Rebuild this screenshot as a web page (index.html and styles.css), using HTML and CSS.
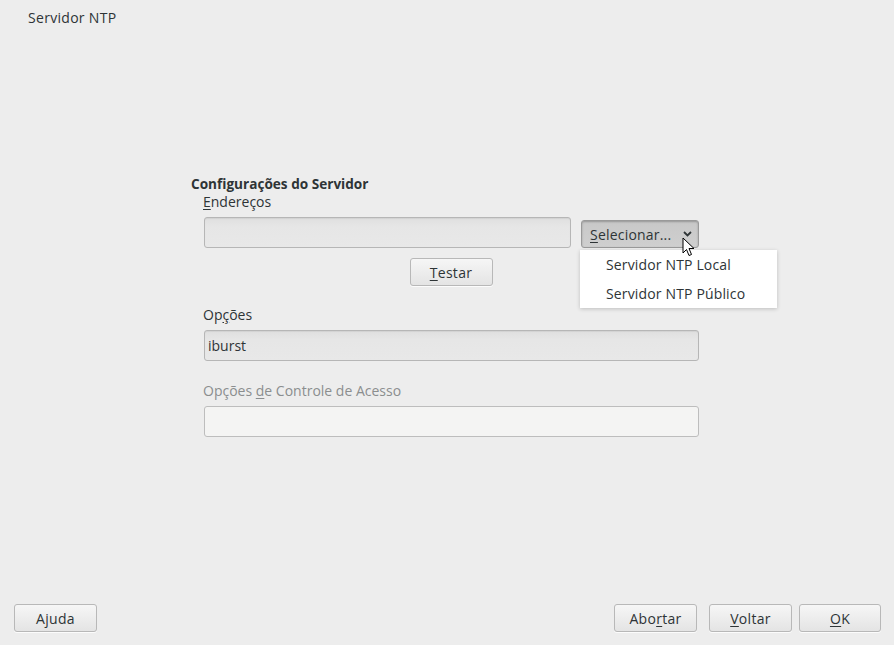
FILE: index.html
```html
<!DOCTYPE html>
<html lang="pt">
<head>
<meta charset="utf-8">
<title>Servidor NTP</title>
<link rel="stylesheet" href="styles.css">
</head>
<body>
<div class="window">
  <div class="title">Servidor NTP</div>
  <div class="content">
    <div class="section">
      <div class="heading">Configurações do Servidor</div>
      <div class="group">
        <div class="label"><u>E</u>ndereços</div>
        <div class="addr-row">
          <div class="entry addr"></div>
          <div class="select-wrap">
            <div class="select"><span><u>S</u>elecionar...</span>
              <svg class="chev" width="9" height="6" viewBox="0 0 9 6"><path d="M1 1 L4.5 4.5 L8 1" fill="none" stroke="#2e3436" stroke-width="1.8"/></svg>
            </div>
            <div class="menu">
              <div class="menu-item">Servidor NTP Local</div>
              <div class="menu-item">Servidor NTP Público</div>
            </div>
            <svg class="cursor" width="14" height="22" viewBox="0 0 14 22"><path d="M1 1 L1 16 L4.5 12.5 L7 18.5 L9.5 17.5 L7 11.5 L12 11.5 Z" fill="#fff" stroke="#000" stroke-width="1" stroke-linejoin="round"/></svg>
          </div>
        </div>
        <div class="test-row"><button class="btn test"><u>T</u>estar</button></div>
        <div class="label opt-label">Op<u>ç</u>ões</div>
        <div class="entry wide">iburst</div>
        <div class="label disabled-label">Opções <u>d</u>e Controle de Acesso</div>
        <div class="entry wide disabled"></div>
      </div>
    </div>
  </div>
  <div class="footer">
    <button class="btn">Ajuda</button>
    <div class="right">
      <button class="btn">Abo<u>r</u>tar</button>
      <button class="btn"><u>V</u>oltar</button>
      <button class="btn ok"><u>O</u>K</button>
    </div>
  </div>
</div>
</body>
</html>
```
FILE: styles.css
```css
html, body {
  margin: 0;
  padding: 0;
  background: #ededed;
}
body {
  font-family: "Open Sans", "Noto Sans", sans-serif;
  font-size: 14px;
  color: #2e3436;
}
u {
  text-decoration: underline;
  text-underline-offset: 2px;
}
.window {
  width: 894px;
  height: 645px;
  display: flex;
  flex-direction: column;
}
.title {
  padding: 9px 0 0 28px;
  line-height: 18px;
  letter-spacing: 0.3px;
}
.content {
  flex: 1;
  padding: 148px 0 0 191px;
}
.section {
  width: 508px;
}
.heading {
  font-weight: 700;
  font-size: 13.6px;
  line-height: 18px;
}
.group {
  padding-left: 12px;
}
.label {
  line-height: 18px;
}
.addr-row {
  display: flex;
  align-items: flex-start;
  margin-top: 6px;
  gap: 10px;
}
.entry {
  box-sizing: border-box;
  height: 31px;
  border: 1px solid #b6b6b6;
  border-radius: 3px;
  background: linear-gradient(#dfdfdf, #e6e6e6 30%, #e8e8e8);
  box-shadow: inset 0 1px 1px rgba(0,0,0,0.06);
  padding: 0 0 0 3px;
  line-height: 29px;
  margin-left: 1px;
}
.entry.addr {
  width: 367px;
}
.entry.wide {
  width: 495px;
}
.entry.disabled {
  background: #f4f4f3;
  border-color: #bdbdbd;
  box-shadow: none;
}
.select-wrap {
  position: relative;
  margin-top: 3px;
}
.select {
  box-sizing: border-box;
  width: 118px;
  height: 28px;
  border: 1px solid #9a9a9a;
  border-radius: 3px;
  background: linear-gradient(#c8c8c8, #cfcfcf);
  box-shadow: inset 0 1px 2px rgba(0,0,0,0.25);
  display: flex;
  align-items: center;
  justify-content: space-between;
  padding: 0 6px 0 8px;
  letter-spacing: 0.2px;
}
.chev {
  display: block;
}
.menu {
  position: absolute;
  left: -1px;
  top: 30px;
  width: 197px;
  background: #fff;
  box-shadow: 0 1px 4px rgba(0,0,0,0.2);
  padding: 0;
}
.menu-item {
  padding-left: 26px;
  line-height: 29px;
  height: 29px;
  letter-spacing: 0.15px;
}
.cursor {
  position: absolute;
  left: 101px;
  top: 17px;
}
.test-row {
  display: flex;
  justify-content: center;
  width: 496px;
  margin-top: 10px;
}
.btn {
  box-sizing: border-box;
  font: inherit;
  color: #2e3436;
  width: 83px;
  height: 28px;
  border: 1px solid #b8b8b8;
  border-radius: 3px;
  background: linear-gradient(#f6f6f6, #e4e4e4);
  box-shadow: 0 1px 0 rgba(255,255,255,0.8);
  padding: 0;
  text-align: center;
  letter-spacing: 0.3px;
}
.opt-label {
  margin-top: 20px;
}
.opt-label + .entry {
  margin-top: 6px;
}
.disabled-label {
  color: #8b8e8f;
  margin-top: 21px;
}
.disabled-label + .entry {
  margin-top: 6px;
}
.footer {
  display: flex;
  justify-content: space-between;
  padding: 0 13px 13px 14px;
}
.footer .right {
  display: flex;
  gap: 12px;
}
.footer .right .btn.ok {
  width: 82px;
  margin-left: -5px;
}
```
